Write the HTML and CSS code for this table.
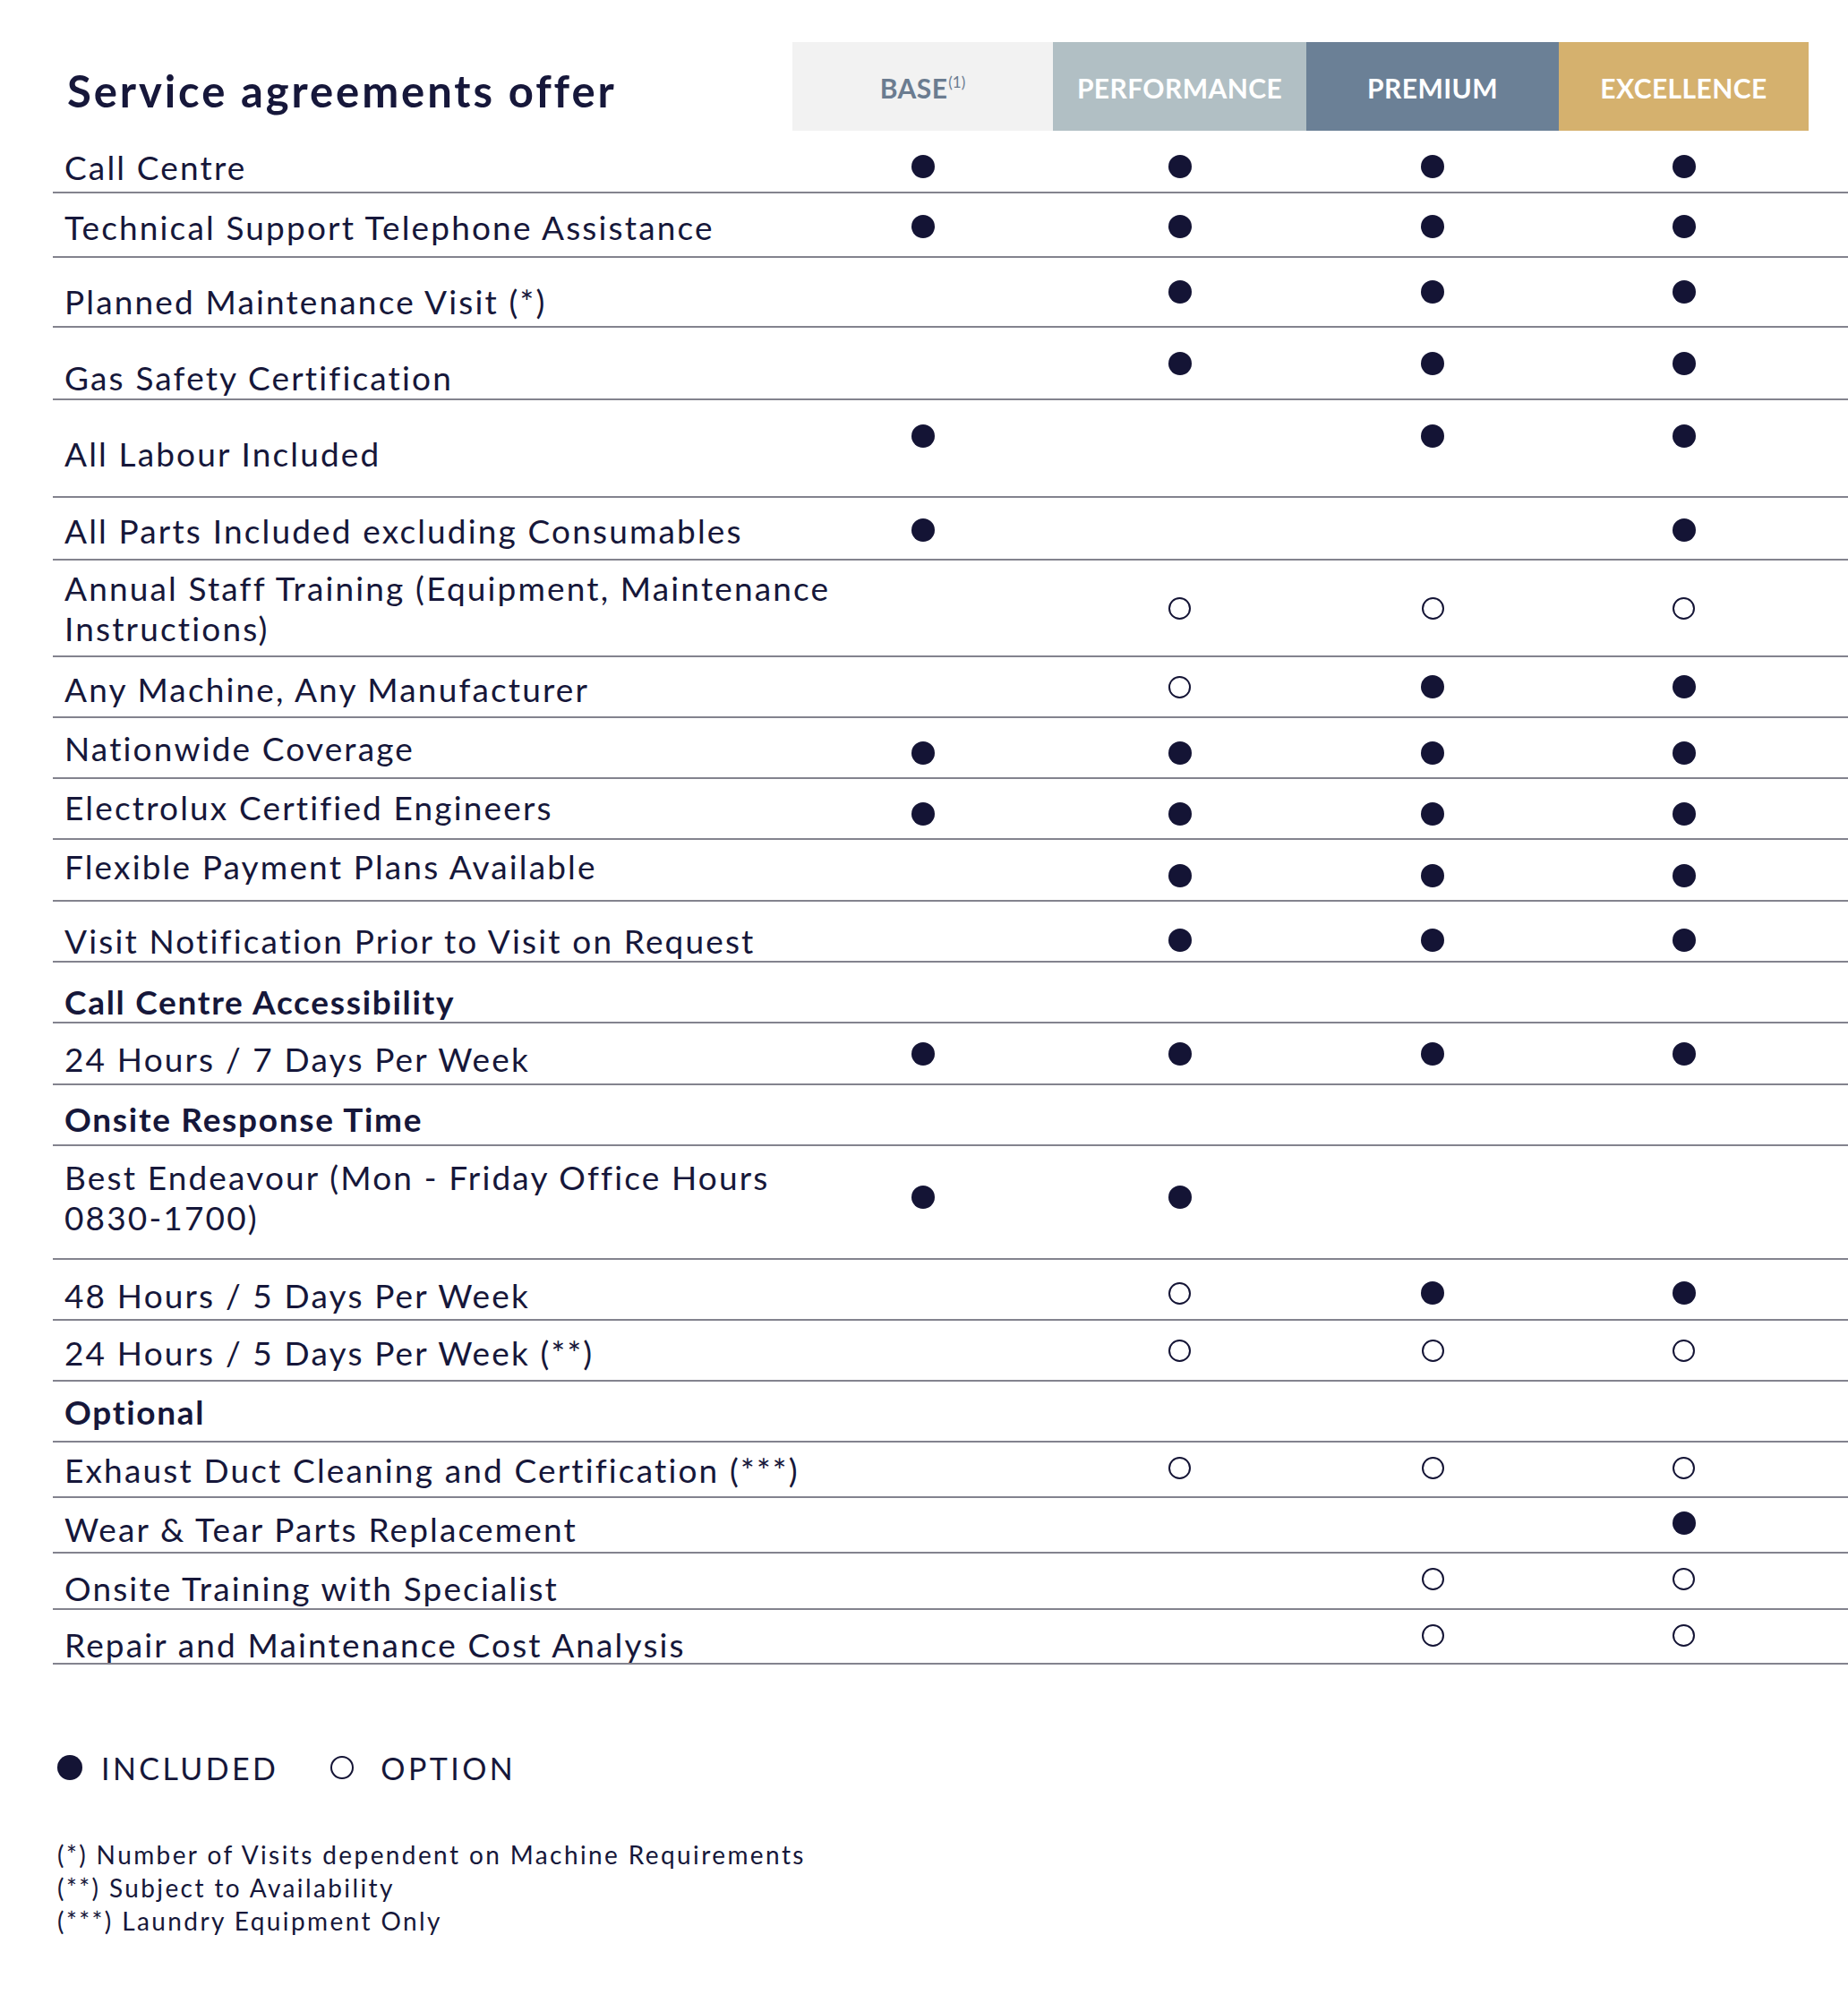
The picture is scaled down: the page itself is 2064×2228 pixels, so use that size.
FILE: index.html
```html
<!DOCTYPE html>
<html lang="en">
<head>
<meta charset="utf-8">
<title>Service agreements offer</title>
<link rel="stylesheet" href="styles.css">
</head>
<body>
<main class="sheet">
  <header class="head">
    <h1 class="title">Service agreements offer</h1>
    <div class="plan plan-base"><span>BASE<sup class="sup">(1)</sup></span></div>
    <div class="plan plan-perf"><span>PERFORMANCE</span></div>
    <div class="plan plan-prem"><span>PREMIUM</span></div>
    <div class="plan plan-exc"><span>EXCELLENCE</span></div>
  </header>

  <section class="table">
    <div class="row h70 dd6">
      <div class="label dy6">Call Centre</div>
      <div class="cell"><span class="dot"></span></div>
      <div class="cell"><span class="dot"></span></div>
      <div class="cell"><span class="dot"></span></div>
      <div class="cell"><span class="dot"></span></div>
    </div>
    <div class="row h72 dd2">
      <div class="label dy2">Technical Support Telephone Assistance</div>
      <div class="cell"><span class="dot"></span></div>
      <div class="cell"><span class="dot"></span></div>
      <div class="cell"><span class="dot"></span></div>
      <div class="cell"><span class="dot"></span></div>
    </div>
    <div class="row h78">
      <div class="label dy10">Planned Maintenance Visit (*)</div>
      <div class="cell"></div>
      <div class="cell"><span class="dot"></span></div>
      <div class="cell"><span class="dot"></span></div>
      <div class="cell"><span class="dot"></span></div>
    </div>
    <div class="row h81">
      <div class="label dy16">Gas Safety Certification</div>
      <div class="cell"></div>
      <div class="cell"><span class="dot"></span></div>
      <div class="cell"><span class="dot"></span></div>
      <div class="cell"><span class="dot"></span></div>
    </div>
    <div class="row h109 dd-14">
      <div class="label dy6">All Labour Included</div>
      <div class="cell"><span class="dot"></span></div>
      <div class="cell"></div>
      <div class="cell"><span class="dot"></span></div>
      <div class="cell"><span class="dot"></span></div>
    </div>
    <div class="row h70 dd2">
      <div class="label dy2">All Parts Included excluding Consumables</div>
      <div class="cell"><span class="dot"></span></div>
      <div class="cell"></div>
      <div class="cell"></div>
      <div class="cell"><span class="dot"></span></div>
    </div>
    <div class="row h108">
      <div class="label">Annual Staff Training (Equipment, Maintenance<br>Instructions)</div>
      <div class="cell"></div>
      <div class="cell"><span class="dot open"></span></div>
      <div class="cell"><span class="dot open"></span></div>
      <div class="cell"><span class="dot open"></span></div>
    </div>
    <div class="row h68">
      <div class="label dy2">Any Machine, Any Manufacturer</div>
      <div class="cell"></div>
      <div class="cell"><span class="dot open"></span></div>
      <div class="cell"><span class="dot"></span></div>
      <div class="cell"><span class="dot"></span></div>
    </div>
    <div class="row h68 dd6">
      <div class="label">Nationwide Coverage</div>
      <div class="cell"><span class="dot"></span></div>
      <div class="cell"><span class="dot"></span></div>
      <div class="cell"><span class="dot"></span></div>
      <div class="cell"><span class="dot"></span></div>
    </div>
    <div class="row h68 dd6">
      <div class="label dy-2">Electrolux Certified Engineers</div>
      <div class="cell"><span class="dot"></span></div>
      <div class="cell"><span class="dot"></span></div>
      <div class="cell"><span class="dot"></span></div>
      <div class="cell"><span class="dot"></span></div>
    </div>
    <div class="row h69 dd6">
      <div class="label dy-4">Flexible Payment Plans Available</div>
      <div class="cell"></div>
      <div class="cell"><span class="dot"></span></div>
      <div class="cell"><span class="dot"></span></div>
      <div class="cell"><span class="dot"></span></div>
    </div>
    <div class="row h68 dd10">
      <div class="label dy10">Visit Notification Prior to Visit on Request</div>
      <div class="cell"></div>
      <div class="cell"><span class="dot"></span></div>
      <div class="cell"><span class="dot"></span></div>
      <div class="cell"><span class="dot"></span></div>
    </div>
    <div class="row h68">
      <div class="label strong dy10">Call Centre Accessibility</div>
    </div>
    <div class="row h69">
      <div class="label dy6">24 Hours / 7 Days Per Week</div>
      <div class="cell"><span class="dot"></span></div>
      <div class="cell"><span class="dot"></span></div>
      <div class="cell"><span class="dot"></span></div>
      <div class="cell"><span class="dot"></span></div>
    </div>
    <div class="row h68">
      <div class="label strong dy4">Onsite Response Time</div>
    </div>
    <div class="row h127 dd-6">
      <div class="label dy-6">Best Endeavour (Mon - Friday Office Hours<br>0830-1700)</div>
      <div class="cell"><span class="dot"></span></div>
      <div class="cell"><span class="dot"></span></div>
      <div class="cell"></div>
      <div class="cell"></div>
    </div>
    <div class="row h68 dd4">
      <div class="label dy6">48 Hours / 5 Days Per Week</div>
      <div class="cell"></div>
      <div class="cell"><span class="dot open"></span></div>
      <div class="cell"><span class="dot"></span></div>
      <div class="cell"><span class="dot"></span></div>
    </div>
    <div class="row h68">
      <div class="label dy2">24 Hours / 5 Days Per Week (**)</div>
      <div class="cell"></div>
      <div class="cell"><span class="dot open"></span></div>
      <div class="cell"><span class="dot open"></span></div>
      <div class="cell"><span class="dot open"></span></div>
    </div>
    <div class="row h68">
      <div class="label strong">Optional</div>
    </div>
    <div class="row h62 dd-2">
      <div class="label">Exhaust Duct Cleaning and Certification (***)</div>
      <div class="cell"></div>
      <div class="cell"><span class="dot open"></span></div>
      <div class="cell"><span class="dot open"></span></div>
      <div class="cell"><span class="dot open"></span></div>
    </div>
    <div class="row h62 dd-2">
      <div class="label dy4">Wear &amp; Tear Parts Replacement</div>
      <div class="cell"></div>
      <div class="cell"></div>
      <div class="cell"></div>
      <div class="cell"><span class="dot"></span></div>
    </div>
    <div class="row h63 dd-2">
      <div class="label dy8">Onsite Training with Specialist</div>
      <div class="cell"></div>
      <div class="cell"></div>
      <div class="cell"><span class="dot open"></span></div>
      <div class="cell"><span class="dot open"></span></div>
    </div>
    <div class="row h61 dd-2">
      <div class="label dy8">Repair and Maintenance Cost Analysis</div>
      <div class="cell"></div>
      <div class="cell"></div>
      <div class="cell"><span class="dot open"></span></div>
      <div class="cell"><span class="dot open"></span></div>
    </div>
  </section>

  <div class="legend">
    <span class="legend-item"><span class="key"></span>INCLUDED</span>
    <span class="legend-item"><span class="key open"></span>OPTION</span>
  </div>

  <div class="notes">
    <p class="note">(*) Number of Visits dependent on Machine Requirements</p>
    <p class="note">(**) Subject to Availability</p>
    <p class="note">(***) Laundry Equipment Only</p>
  </div>
</main>
</body>
</html>
```

FILE: styles.css
```css
* { box-sizing: border-box; }

html, body {
  margin: 0;
  padding: 0;
  background: #ffffff;
}

body {
  font-family: "Lato", "Noto Sans", "Liberation Sans", sans-serif;
  color: #16173a;
}

.sheet {
  width: 2064px;
  padding: 47px 0 0 59px;
}

.head,
.row {
  display: grid;
  grid-template-columns: 826px 291px 283px 282px 279px;
}

.head {
  height: 99px;
}

.title {
  margin: 0;
  align-self: center;
  padding: 8px 0 0 16px;
  font-size: 49px;
  font-weight: 700;
  letter-spacing: 2.9px;
  color: #16173a;
  white-space: nowrap;
}

.plan {
  display: flex;
  align-items: center;
  justify-content: center;
  font-size: 30px;
  font-weight: 700;
  letter-spacing: 0.4px;
  color: #ffffff;
  padding-top: 2px;
}

.plan-base { background: #f2f2f2; color: #6b7c90; }
.plan-perf { background: #b1bfc4; }
.plan-prem { background: #6b8096; }
.plan-exc  { background: #d5b16e; }

.sup {
  font-size: 17px;
  font-weight: 400;
  letter-spacing: 0;
  vertical-align: 12px;
  line-height: 0;
  margin-left: 1px;
}

.row {
  border-bottom: 2px solid #83838e;
  align-items: center;
}

.h61 { height: 61px; }
.h62 { height: 62px; }
.h63 { height: 63px; }
.h68 { height: 68px; }
.h69 { height: 69px; }
.h70 { height: 70px; }
.h72 { height: 72px; }
.h78 { height: 78px; }
.h81 { height: 81px; }
.h108 { height: 108px; }
.h109 { height: 109px; }
.h127 { height: 127px; }

.label {
  padding-left: 13px;
  font-size: 37px;
  line-height: 45px;
  letter-spacing: 2.15px;
  white-space: nowrap;
  position: relative;
  z-index: 1;
}

.label.strong {
  font-weight: 700;
  letter-spacing: 1.7px;
}

/* vertical nudges of the label (shift of the centre = half the margin) */
.dy-6 { margin-bottom: 12px; }
.dy-4 { margin-bottom: 8px; }
.dy-2 { margin-bottom: 4px; }
.dy2  { margin-top: 4px; }
.dy4  { margin-top: 8px; }
.dy6  { margin-top: 12px; }
.dy8  { margin-top: 16px; }
.dy10 { margin-top: 20px; }
.dy12 { margin-top: 24px; }
.dy16 { margin-top: 32px; }

.cell {
  display: flex;
  justify-content: center;
  align-items: center;
}

/* vertical nudges of the marks of a row */
.dd-14 .cell { margin-bottom: 28px; }
.dd-6 .cell  { margin-bottom: 12px; }
.dd-2 .cell  { margin-bottom: 4px; }
.dd2 .cell   { margin-top: 4px; }
.dd4 .cell   { margin-top: 8px; }
.dd6 .cell   { margin-top: 12px; }
.dd10 .cell  { margin-top: 20px; }

.dot {
  display: block;
  width: 26px;
  height: 26px;
  border-radius: 50%;
  background: #141435;
}

.dot.open {
  width: 25px;
  height: 25px;
  background: transparent;
  border: 2px solid #141435;
}

.legend {
  display: flex;
  align-items: center;
  gap: 58px;
  margin-top: 95px;
  padding-left: 5px;
  height: 40px;
}

.legend-item {
  display: flex;
  align-items: center;
  font-size: 34px;
  font-weight: 400;
  letter-spacing: 3.4px;
  color: #16173a;
}

.key {
  display: block;
  width: 28px;
  height: 28px;
  border-radius: 50%;
  background: #141435;
  margin-right: 21px;
}

.key.open {
  width: 26px;
  height: 26px;
  background: transparent;
  border: 2px solid #141435;
  margin-right: 30px;
}

.notes {
  margin-top: 59px;
  padding-left: 5px;
}

.note {
  margin: 0;
  font-size: 28px;
  line-height: 37px;
  letter-spacing: 2.4px;
  color: #16173a;
}
```
